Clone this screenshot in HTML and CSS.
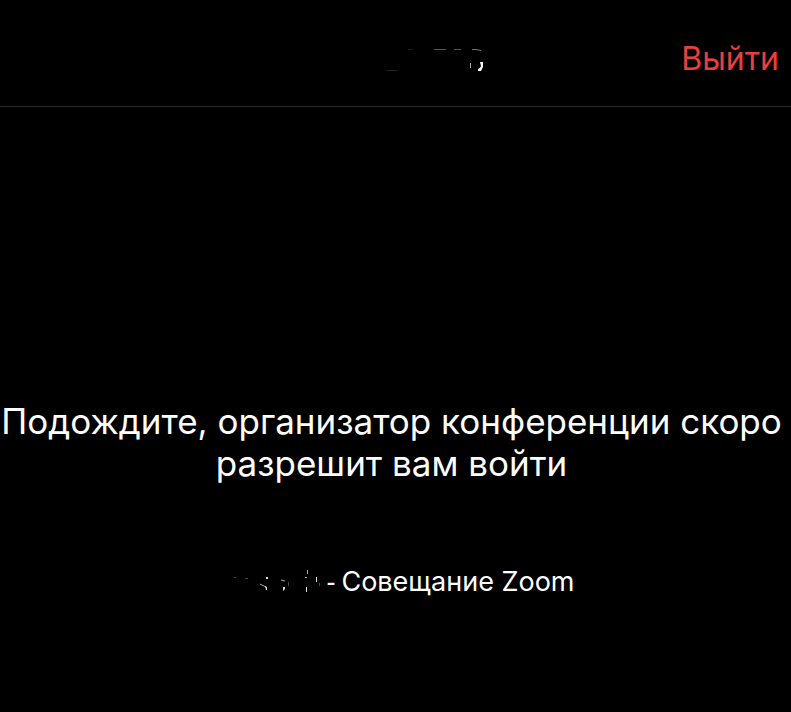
FILE: index.html
```html
<!DOCTYPE html>
<html lang="ru">
<head>
<meta charset="utf-8">
<meta name="viewport" content="width=device-width, initial-scale=1">
<title>Совещание Zoom</title>
<link rel="stylesheet" href="styles.css">
</head>
<body>
<header class="topbar">
  <svg class="topbar-title" width="191" height="40" viewBox="300 40 191 40" aria-hidden="true">
    <g fill="none" stroke-width="1">
      <path stroke="#1c1c1c" d="M386 71.5h12M408 50.5h5"/>
      <path stroke="#555" d="M434 50.5h12M454 50.5h7"/>
      <path stroke="#777" d="M472 50.5h4l5 1"/>
      <path stroke="#aaa" d="M470.500 64v5"/>
    </g>
    <path fill="#fff" d="M480 63h3v5l-2 4h-3v-2l2-1 1-2z"/>
  </svg>
  <button class="leave" type="button">Выйти</button>
</header>
<main class="waiting">
  <h1 class="message">Подождите, организатор конференции скоро разрешит вам войти</h1>
  <p class="meeting">
    <svg class="meeting-name" width="110" height="40" viewBox="216 562 110 40" aria-hidden="true">
      <g fill="none" stroke="#aaa" stroke-width="1">
        <path stroke="#444" d="M234 577.500h2M245 578.500h3M288.500 582v4M319.500 583v3"/>
        <path d="M260 584l6 3M281 580l4 1M305 577.500h2M307.500 570v4"/>
      </g>
      <path fill="#ddd" d="M266 577h2v2h-2zM265 586l2 1v3h-1zM283 587h2v2l-2 2zM316 577h1v5h-1zM306 587h1v5h-1z"/>
    </svg>
    <span class="dash">-</span>
    <span>Совещание Zoom</span>
  </p>
</main>
</body>
</html>
```
FILE: styles.css
```css
* {
  box-sizing: border-box;
}

body {
  margin: 0;
  min-height: 100vh;
  background: #000;
  color: #fff;
  font-family: Inter, "Liberation Sans", sans-serif;
}

.topbar {
  display: grid;
  grid-template-columns: 1fr auto 1fr;
  align-items: center;
  padding: 39px 12px 27px;
  border-bottom: 1px solid #2a2a2a;
}

.topbar-title {
  grid-column: 2;
  display: block;
}

.leave {
  justify-self: end;
  padding: 0;
  border: 0;
  background: none;
  color: #e8403f;
  font: inherit;
  font-size: 32px;
  line-height: 40px;
  cursor: pointer;
}

.waiting {
  padding-top: 293px;
  text-align: center;
}

.message {
  margin: 0;
  padding-right: 8px;
  font-size: 35px;
  font-weight: 400;
  line-height: 42px;
}

.meeting {
  display: flex;
  justify-content: center;
  align-items: center;
  margin: 78px 0 0;
  font-size: 27px;
  line-height: 40px;
}

.dash {
  margin-right: 6px;
  font-family: "Liberation Sans", sans-serif;
}
```
